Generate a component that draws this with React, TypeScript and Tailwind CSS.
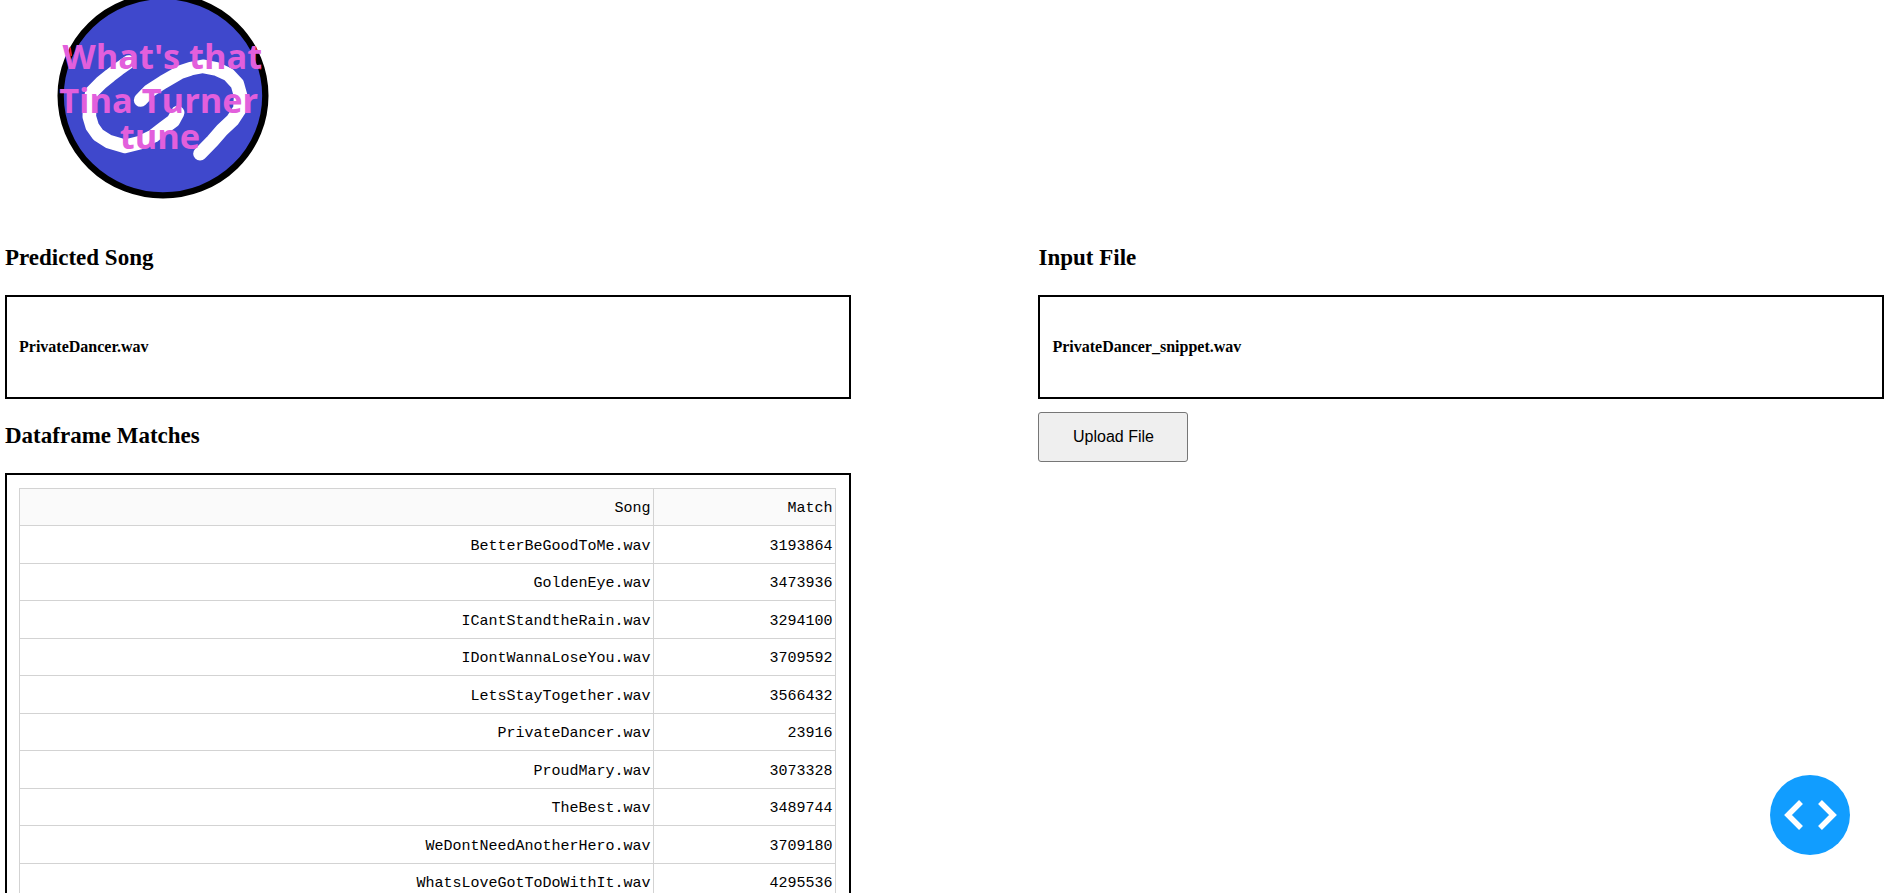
import type { ReactNode } from "react";

const matches = [
  { song: "BetterBeGoodToMe.wav", match: 3193864 },
  { song: "GoldenEye.wav", match: 3473936 },
  { song: "ICantStandtheRain.wav", match: 3294100 },
  { song: "IDontWannaLoseYou.wav", match: 3709592 },
  { song: "LetsStayTogether.wav", match: 3566432 },
  { song: "PrivateDancer.wav", match: 23916 },
  { song: "ProudMary.wav", match: 3073328 },
  { song: "TheBest.wav", match: 3489744 },
  { song: "WeDontNeedAnotherHero.wav", match: 3709180 },
  { song: "WhatsLoveGotToDoWithIt.wav", match: 4295536 },
];

function Logo() {
  return (
    <svg viewBox="0 0 750 600" className="ml-10 block h-[200px] w-[250px]" role="img" aria-label="What's that Tina Turner tune">
      <ellipse cx="369" cy="287" rx="307" ry="299" fill="#3f48cc" stroke="#000" strokeWidth="19" />
      <path d="M90 142l4 26M646 140l4 14M660 196l2 12" stroke="#ed1c24" strokeWidth="5" />
      <g fill="none" stroke="#fff" strokeWidth="41" strokeLinecap="round" strokeLinejoin="round">
        <path d="M266 186L236 207L211 226L184 248L156 276L149 315L148 350L157 380L174 404L207 425L255 439L300 428L340 408L372 383L400 362L413 338" />
        <path d="M302 300L328 273L370 246L420 217L452 206L488 199L530 207L566 224L592 252L602 288L600 326L578 360L546 390L518 422L480 461" />
      </g>
      <g fill="#e25fdc" className="font-['Open_Sans',sans-serif] font-bold" fontSize="103" textAnchor="middle">
        <text x="367" y="208">What's that</text>
        <text x="356" y="340">Tina Turner</text>
        <text x="360" y="448">tune</text>
      </g>
    </svg>
  );
}

function Heading({ children }: { children: ReactNode }) {
  return <h2 className="pt-6 pb-6 text-[23px] leading-[26px] font-bold">{children}</h2>;
}

function FileBox({ name }: { name: string }) {
  return (
    <div className="border-2 border-black px-3 py-10">
      <h4 className="text-base leading-5 font-bold">{name}</h4>
    </div>
  );
}

function MatchTable() {
  return (
    <div className="border-2 border-black pt-[13px] pr-[13px] pb-3 pl-3">
      <table className="w-full border-collapse text-right font-['Liberation_Mono',monospace] text-[15px] leading-5">
        <thead>
          <tr className="h-[37px] bg-[#fafafa]">
            <th scope="col" className="border border-[#d3d3d3] pt-1 pr-[2px] font-normal">Song</th>
            <th scope="col" className="w-[182px] border border-[#d3d3d3] pt-1 pr-[2px] font-normal">Match</th>
          </tr>
        </thead>
        <tbody>
          {matches.map((row) => (
            <tr key={row.song} className="odd:h-[38px] even:h-[37px]">
              <td className="border border-[#d3d3d3] pt-1 pr-[2px]">{row.song}</td>
              <td className="border border-[#d3d3d3] pt-1 pr-[2px]">{row.match}</td>
            </tr>
          ))}
        </tbody>
      </table>
    </div>
  );
}

export default function App() {
  return (
    <div className="h-screen overflow-hidden bg-white font-['Liberation_Serif',serif] text-black">
      <header className="pb-[21px]">
        <Logo />
      </header>
      <main className="flex items-start justify-between pr-[3px] pl-[5px]">
        <section className="w-[45%]">
          <Heading>Predicted Song</Heading>
          <FileBox name="PrivateDancer.wav" />
          <Heading>Dataframe Matches</Heading>
          <MatchTable />
        </section>
        <section className="w-[45%]">
          <Heading>Input File</Heading>
          <FileBox name="PrivateDancer_snippet.wav" />
          <button
            type="button"
            className="mt-[13px] h-[50px] min-w-[150px] rounded-[3px] border border-[#767676] bg-[#efefef] px-8 font-['Liberation_Sans',sans-serif] text-base"
          >
            Upload File
          </button>
        </section>
      </main>
      <button
        type="button"
        aria-label="Toggle debug menu"
        className="fixed right-[37px] bottom-[38px] flex size-20 items-center justify-center rounded-full bg-[#119dff]"
      >
        <svg viewBox="0 0 80 80" className="size-20" fill="none" stroke="#fff" strokeWidth="5.5">
          <path d="M31 27L18 40L31 53M50 27L63 40L50 53" />
        </svg>
      </button>
    </div>
  );
}
